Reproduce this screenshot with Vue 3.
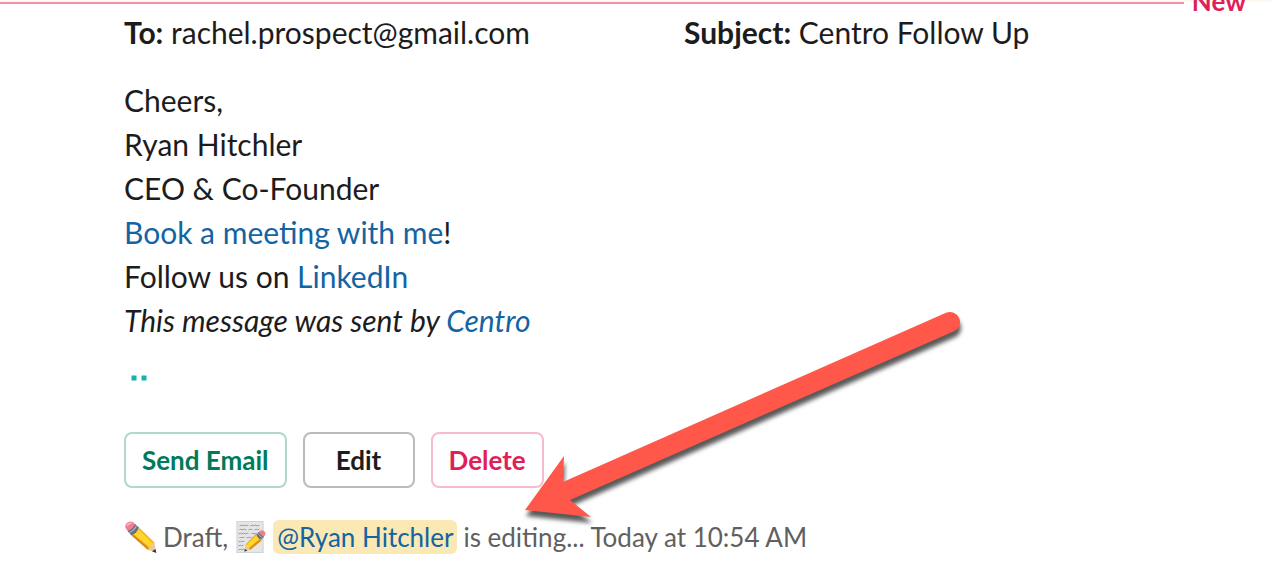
<script setup>
const fields = [
  { label: 'To:', value: 'rachel.prospect@gmail.com' },
  { label: 'Subject:', value: 'Centro Follow Up' },
]
const actions = [
  { text: 'Send Email', kind: 'send' },
  { text: 'Edit', kind: 'edit' },
  { text: 'Delete', kind: 'delete' },
]
</script>

<template>
  <main class="page">
    <div class="divider">
      <span class="rule"></span>
      <span class="new">New</span>
    </div>

    <article class="message">
      <div class="fields">
        <div v-for="f in fields" :key="f.label"><b>{{ f.label }}</b> {{ f.value }}</div>
      </div>

      <div class="body">
        <div>Cheers,</div>
        <div>Ryan Hitchler</div>
        <div>CEO &amp; Co-Founder</div>
        <div><a href="#">Book a meeting with me</a>!</div>
        <div>Follow us on <a href="#">LinkedIn</a></div>
        <div><i>This message was sent by <a href="#">Centro</a></i></div>
      </div>

      <svg class="dots" viewBox="0 0 30 8" aria-hidden="true">
        <path d="M7.500 1.500h5v5h-5zM17.500 1.500h5v5h-5z" />
      </svg>

      <div class="actions">
        <button v-for="a in actions" :key="a.kind" type="button" :class="a.kind">{{ a.text }}</button>
      </div>

      <div class="status">
        <svg class="emoji" viewBox="0 0 32 32" role="img" aria-label="Pencil">
          <path d="M1 7Q0 3.500 3 1.600Q6 -.5 8.500 1L11.500 4L4 11Z" fill="#ef7f8c" />
          <path d="M2.500 5Q4 2.200 7 2" fill="none" stroke="#f9b5bd" stroke-width="1.500" />
          <path d="M3 10Q8 8.500 10.500 3L14.500 6.500Q12.500 12.500 7 14.500Z" fill="#66717e" />
          <path d="M5 11.500Q10 9.500 12 4.500" fill="none" stroke="#aab4be" stroke-width="1.300" />
          <path d="M7 14.500Q12.500 12.500 14.500 6.500L30 21.500L23.500 29Z" fill="#f5b51b" />
          <path d="M9.500 13.500Q13 11.500 14.500 8.500L28.500 23L25.500 27Z" fill="#ffd62f" />
          <path d="M7 14.500L9 13.500L25.500 27.500L23.500 29Z" fill="#dd8d13" />
          <path d="M23.500 29L24.300 25.800L26.500 25.200L27 22.500L30 21.500L31.500 31.500Z" fill="#edc795" />
          <path d="M27.500 30.300L31 28L31.800 31.900Z" fill="#333" />
        </svg>
        <span>Draft,</span>
        <svg class="emoji" viewBox="0 0 32 32" role="img" aria-label="Memo">
          <rect x="2" y="0" width="27" height="32" fill="#e5e6e7" />
          <rect x="2.500" y=".5" width="26" height="31" fill="none" stroke="#d2d3d5" />
          <g fill="none" stroke="#858585" stroke-width=".8">
            <path d="M5 5l2-1 1 1 2-1 2 1 1-1 1 1M16 5l2-1 1 1 2-1 2 1 2-1" />
            <path d="M5 9l1-1 2 1 1-1 3 1M14 9l2-1 1 1 1-1M20 9l2-1 1 1 2-1" />
            <path d="M4 13l2-1 1 1 2-1 2 1 2-1 1 1M17 13l1-1 2 1 2-1" />
            <path d="M5 17l1-1 1 1 2-1 1 1M12 17l2-1 1 1 2-1" />
            <path d="M4 21l2-1 1 1 2-1 1 1M4 25l2-1 1 1 2-1M4 29l2-1 1 1 2-1 2 1 2-1" />
          </g>
          <g transform="translate(31.500 9) scale(-.68 .68)">
            <path d="M1 7Q0 3.500 3 1.600Q6 -.5 8.500 1L11.500 4L4 11Z" fill="#ef7f8c" />
            <path d="M3 10Q8 8.500 10.500 3L14.500 6.500Q12.500 12.500 7 14.500Z" fill="#66717e" />
            <path d="M5 11.500Q10 9.500 12 4.500" fill="none" stroke="#aab4be" stroke-width="1.300" />
            <path d="M6.500 15Q13 13 15 6L30 21L23 29Z" fill="#f5b51b" />
            <path d="M10 13.500Q13 11.500 14.500 8.500L28.500 22.500L25.500 26.500Z" fill="#ffd62f" />
            <path d="M6.500 15L9 13.500L25.500 27.500L23 29Z" fill="#dd8d13" />
            <path d="M23 29L30 21L31.500 31.500Z" fill="#edc795" />
            <path d="M27.500 30.300L31 28L31.800 31.900Z" fill="#333" />
          </g>
        </svg>
        <a class="mention" href="#">@Ryan Hitchler</a>
        <span>is editing... Today at 10:54 AM</span>
      </div>

      <svg class="arrow" viewBox="0 0 460 230" aria-hidden="true">
        <path d="M15 210L54 156L53 182L436 12.800A10 10 0 0 1 444 31.200L60 200L81 217Z" />
      </svg>
    </article>
  </main>
</template>

<style>
body {
  margin: 0;
  background: #fff;
}
</style>

<style scoped>
.page {
  overflow: hidden;
  color: #1d1c1d;
  font-family: Lato, "Open Sans", sans-serif;
  font-size: 30px;
  line-height: 44px;
}
.divider {
  display: flex;
  align-items: center;
  gap: 8px;
  height: 10px;
  padding-right: 26px;
  background: linear-gradient(#fef9ec 2px, #fff 2px);
}
.rule {
  flex: 1;
  height: 2px;
  margin-bottom: 4px;
  background: #f48fb1;
}
.new {
  margin-bottom: 8px;
  color: #e01e5a;
  font-size: 26px;
  font-weight: 700;
  line-height: 32px;
}
.message {
  position: relative;
  padding: 0 28px 0 124px;
}
.fields {
  display: grid;
  grid-template-columns: 1fr 1fr;
}
.body {
  margin-top: 24px;
}
a {
  color: #1264a3;
  text-decoration: none;
}
.dots {
  display: block;
  width: 30px;
  height: 8px;
  margin-top: 32px;
  fill: #0fb5ae;
}
.actions {
  display: flex;
  gap: 16px;
  margin-top: 50px;
}
button {
  min-width: 112px;
  height: 56px;
  padding: 0 16px;
  border: 2px solid #bbb;
  border-radius: 8px;
  background: #fff;
  color: #1d1c1d;
  font: 700 26px/32px Lato, "Open Sans", sans-serif;
}
.send {
  border-color: #b2d8ca;
  color: #007a5a;
}
.delete {
  border-color: #f6bcce;
  color: #e01e5a;
}
.status {
  display: flex;
  align-items: center;
  gap: 6px;
  margin-top: 32px;
  color: #616061;
  font-size: 26px;
  line-height: 34px;
  white-space: nowrap;
}
.emoji {
  width: 33px;
  height: 32px;
}
.mention {
  padding: 0 4px;
  border-radius: 6px;
  background: #fae8b5;
}
.arrow {
  position: absolute;
  top: 290px;
  left: 510px;
  width: 460px;
  height: 230px;
  overflow: visible;
  fill: #ff584a;
  filter: drop-shadow(1px 6px 2px rgba(0, 0, 0, 0.65));
  pointer-events: none;
}
</style>
